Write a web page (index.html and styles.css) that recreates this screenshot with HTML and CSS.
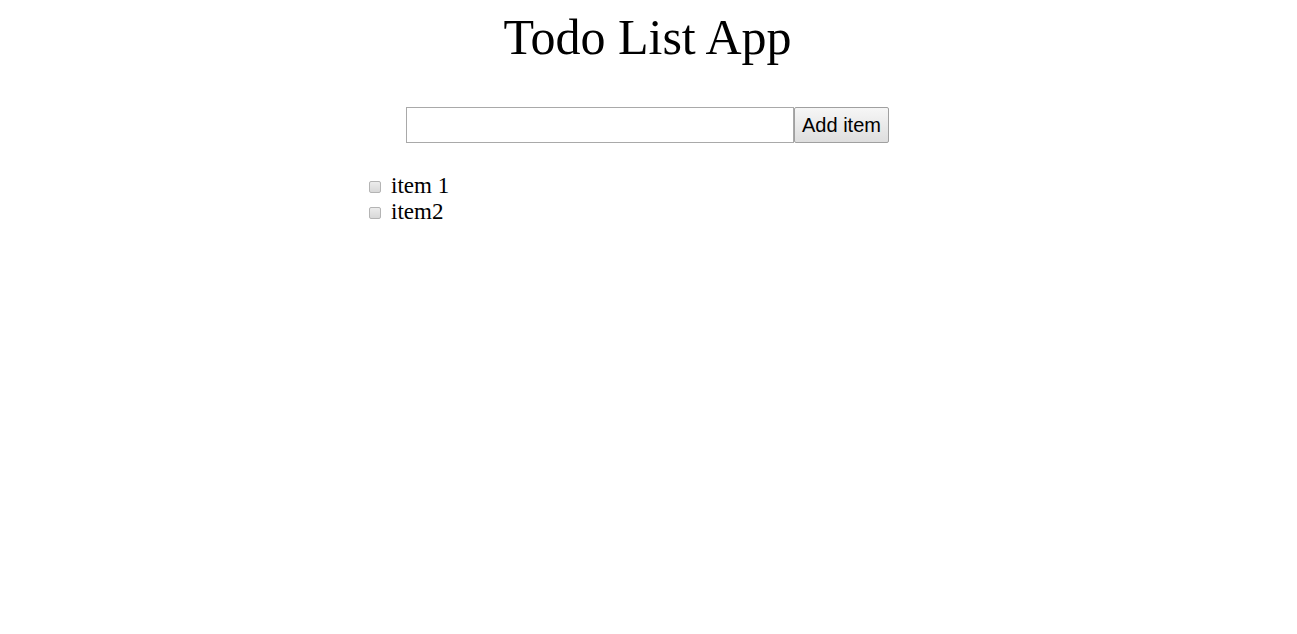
FILE: index.html
```html
<!DOCTYPE html>
<html>
<head>
<meta charset="utf-8">
<link rel="stylesheet" href="styles.css">
</head>
<body>
<div class="app">
  <h1 class="title">Todo List App</h1>
  <form class="add-form">
    <input class="add-input" type="text">
    <button class="add-btn" type="button">Add item</button>
  </form>
  <ul class="todo-list">
    <li class="todo-item"><input type="checkbox" class="todo-check"><span class="todo-text">item 1</span></li>
    <li class="todo-item"><input type="checkbox" class="todo-check"><span class="todo-text">item2</span></li>
  </ul>
</div>
</body>
</html>
```
FILE: styles.css
```css
body {
  margin: 8px;
  font-family: "Liberation Serif", serif;
  background: #fff;
  color: #000;
}
.app {
  display: flex;
  flex-direction: column;
  align-items: center;
}
.title {
  font-size: 50px;
  font-weight: normal;
  margin: 0 0 41px 0;
  padding-right: 2px;
  text-align: center;
}
.add-form {
  display: flex;
  margin: 0;
  padding-right: 2px;
}
.add-input {
  width: 388px;
  height: 36px;
  box-sizing: border-box;
  border: 1px solid #a9a9a9;
  font-size: 20px;
  margin: 0;
  padding: 2px 4px;
}
.add-btn {
  height: 36px;
  box-sizing: border-box;
  font-family: "Liberation Sans", sans-serif;
  font-size: 20px;
  margin: 0;
  padding: 0 7px;
  border: 1px solid #a0a0a0;
  border-radius: 2px;
  background: linear-gradient(#f6f6f6, #dedede);
  color: #000;
}
.todo-list {
  align-self: stretch;
  list-style: none;
  margin: 30px 0 0 0;
  padding: 0 0 0 361px;
  font-size: 23px;
}
.todo-item {
  display: flex;
  align-items: center;
  height: 26px;
}
.todo-check {
  appearance: none;
  -webkit-appearance: none;
  margin: 1px 10px 0 0;
  width: 12px;
  height: 12px;
  box-sizing: border-box;
  border: 1px solid #b4b4b4;
  border-radius: 2px;
  background: linear-gradient(#ececec, #d8d8d8);
}
```
